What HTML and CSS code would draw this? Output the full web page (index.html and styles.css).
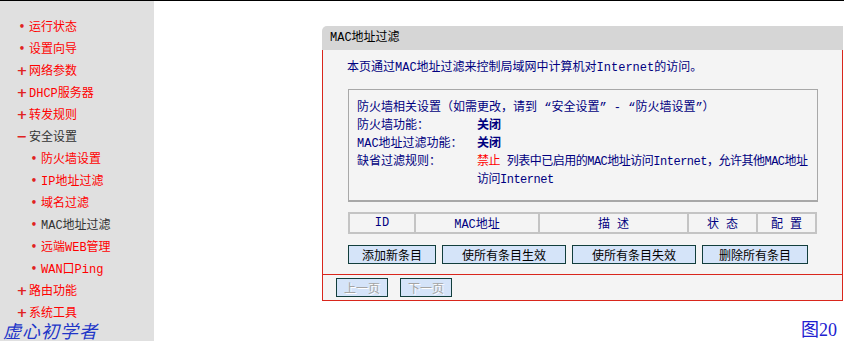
FILE: index.html
```html
<!DOCTYPE html>
<html lang="zh-CN">
<head>
  <meta charset="UTF-8" />
  <title>MAC地址过滤</title>
  <link rel="stylesheet" href="styles.css">
</head>
<body>

<div class="page">
  <ul class="menu">
    <li class="item"><span class="mark dot">•</span><a href="#">运行状态</a></li>
    <li class="item"><span class="mark dot">•</span><a href="#">设置向导</a></li>
    <li class="item"><span class="mark plus">+</span><a href="#">网络参数</a></li>
    <li class="item"><span class="mark plus">+</span><a href="#">DHCP服务器</a></li>
    <li class="item"><span class="mark plus">+</span><a href="#">转发规则</a></li>
    <li class="item open"><span class="mark minus">−</span><a href="#">安全设置</a></li>
    <li class="item sub"><span class="mark dot">•</span><a href="#">防火墙设置</a></li>
    <li class="item sub"><span class="mark dot">•</span><a href="#">IP地址过滤</a></li>
    <li class="item sub"><span class="mark dot">•</span><a href="#">域名过滤</a></li>
    <li class="item sub current"><span class="mark dot">•</span><a href="#">MAC地址过滤</a></li>
    <li class="item sub"><span class="mark dot">•</span><a href="#">远端WEB管理</a></li>
    <li class="item sub"><span class="mark dot">•</span><a href="#">WAN口Ping</a></li>
    <li class="item"><span class="mark plus">+</span><a href="#">路由功能</a></li>
    <li class="item"><span class="mark plus">+</span><a href="#">系统工具</a></li>
  </ul>

  <div class="main">
    <div class="panel">
      <div class="panel-title">MAC地址过滤</div>
      <div class="panel-body">
        <p class="intro">本页通过MAC地址过滤来控制局域网中计算机对Internet的访问。</p>

        <div class="info-box">
          <div class="info-head">防火墙相关设置（如需更改，请到 “安全设置” - “防火墙设置”）</div>
          <div class="info-row">
            <span class="info-label">防火墙功能：</span>
            <span class="info-value strong">关闭</span>
          </div>
          <div class="info-row">
            <span class="info-label">MAC地址过滤功能：</span>
            <span class="info-value strong">关闭</span>
          </div>
          <div class="info-row">
            <span class="info-label">缺省过滤规则：</span>
            <span class="info-value rule"><span class="deny">禁止</span> 列表中已启用的MAC地址访问Internet，允许其他MAC地址<br>访问Internet</span>
          </div>
        </div>

        <table class="rules">
          <tr>
            <th class="col-id">ID</th>
            <th class="col-mac">MAC地址</th>
            <th class="col-desc">描 述</th>
            <th class="col-state">状 态</th>
            <th class="col-conf">配 置</th>
          </tr>
        </table>

        <div class="actions">
          <button class="btn w88">添加新条目</button>
          <button class="btn w124">使所有条目生效</button>
          <button class="btn w124">使所有条目失效</button>
          <button class="btn w106">删除所有条目</button>
        </div>
      </div>
      <div class="panel-foot">
        <button class="btn pager" disabled>上一页</button>
        <button class="btn pager" disabled>下一页</button>
      </div>
    </div>
  </div>
</div>

<div class="watermark">虚心初学者</div>
<div class="caption">图20</div>

</body>
</html>
```

FILE: styles.css
```css
body {
  margin: 0;
  border-top: 1px solid #000;
  font-family: "Liberation Mono", "Noto Sans CJK SC", monospace;
  font-size: 12px;
  background: #fff;
  height: 340px;
  overflow: hidden;
}

.page {
  display: flex;
  height: 100%;
}

/* left menu */
.menu {
  list-style: none;
  margin: 0;
  padding: 14px 0 0 0;
  width: 154px;
  background: #e0e0e0;
  flex-shrink: 0;
}

.item {
  display: flex;
  align-items: center;
  height: 22px;
  padding-left: 16px;
}

.item.sub {
  padding-left: 28px;
}

.item a {
  color: #ff0000;
  text-decoration: none;
  margin-left: 1px;
}

.item.open a,
.item.current a {
  color: #333;
}

.mark {
  width: 12px;
  text-align: center;
  color: #e02222;
  font-weight: bold;
  font-family: "DejaVu Sans", sans-serif;
}

.mark.dot {
  font-size: 10px;
}

.mark.plus {
  font-size: 13px;
}

.mark.minus {
  font-size: 13px;
}

/* main area */
.main {
  flex: 1;
  padding: 25px 0 0 168px;
}

.panel {
  width: 521px;
}

.panel-title {
  height: 24px;
  line-height: 24px;
  background: #d6d6d6;
  border-top-left-radius: 5px;
  padding-left: 8px;
  color: #000;
}

.panel-body {
  background: #f4f4f4;
  border-left: 1px solid #d9261c;
  border-right: 1px solid #d9261c;
  padding: 9px 24px 10px 25px;
  color: #000080;
}

.intro {
  margin: 0 0 12px -1px;
  line-height: 18px;
}

.info-box {
  border: 1px solid #a8a8a8;
  border-bottom-width: 2px;
  padding: 9px 8px 11px 8px;
  line-height: 18px;
  white-space: nowrap;
}

.info-row {
  display: flex;
}

.info-label {
  width: 120px;
  flex-shrink: 0;
}

.info-value.rule {
  letter-spacing: -0.5px;
}

.strong {
  font-weight: bold;
}

.deny {
  color: #ff0000;
}

.rules {
  margin-top: 10px;
  width: 469px;
  border-collapse: collapse;
  border: 2px solid #c4c4c4;
}

.rules th {
  height: 17px;
  font-weight: normal;
  color: #000080;
  border: 2px solid #c4c4c4;
  padding: 0;
}

.col-id { width: 64px; }
.col-mac { width: 122px; }
.col-desc { width: 147px; }
.col-state { width: 67px; }

.actions {
  display: flex;
  gap: 6px;
  margin-top: 11px;
}

.btn {
  height: 19px;
  padding: 0;
  background: #d5e4f9;
  border: 1px solid #123e3c;
  font-family: "Noto Sans CJK SC", sans-serif;
  font-size: 12px;
  line-height: 17px;
  color: #000;
}

.w88 { width: 88px; }
.w124 { width: 124px; }
.w106 { width: 106px; }

.panel-foot {
  display: flex;
  gap: 12px;
  background: #f4f4f4;
  border: 1px solid #d9261c;
  padding: 3px 0 3px 13px;
  height: 19px;
}

.btn.pager {
  width: 52px;
  color: #a4a4a4;
  text-shadow: 1px 1px 0 #fff;
}

/* overlays */
.watermark {
  position: absolute;
  left: 3px;
  top: 321px;
  line-height: 18px;
  font-family: "Noto Sans CJK SC", sans-serif;
  font-size: 18px;
  font-style: italic;
  color: #2236c8;
  letter-spacing: 1px;
}

.caption {
  position: absolute;
  left: 801px;
  top: 321px;
  line-height: 18px;
  font-family: "Liberation Serif", "Noto Sans CJK SC", serif;
  font-size: 18px;
  color: #2020d0;
}
```
